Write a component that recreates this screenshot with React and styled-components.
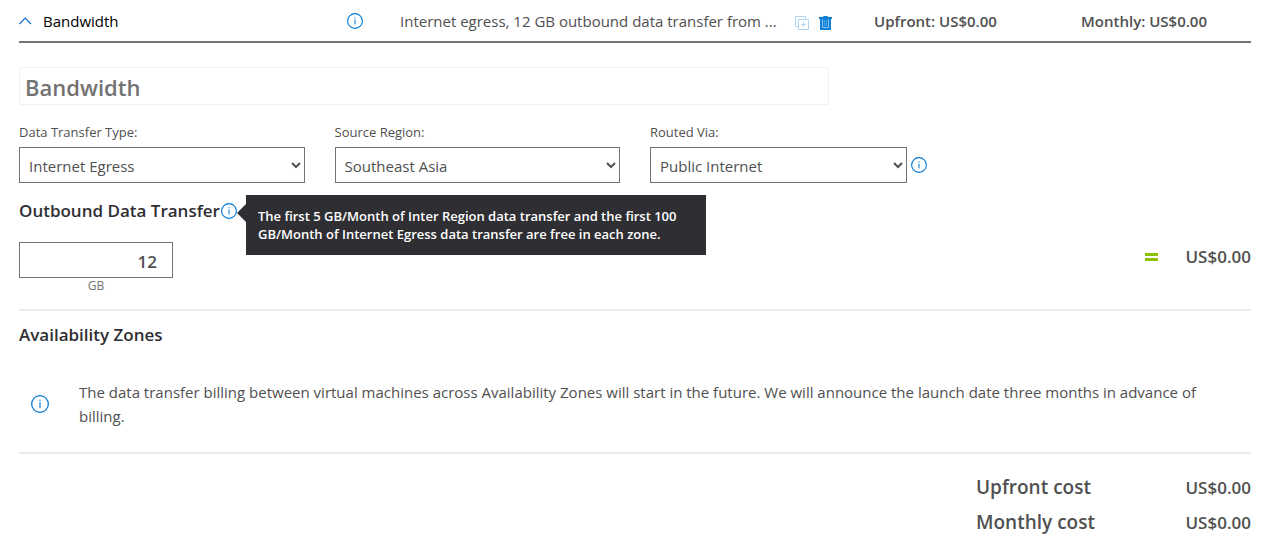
import React from "react";
import styled, { createGlobalStyle } from "styled-components";

const GlobalStyle = createGlobalStyle`
  *, *::before, *::after { box-sizing: border-box; }
  body {
    margin: 0;
    background: #fff;
    color: #505050;
    font-family: "Segoe UI", "Open Sans", "Noto Sans", sans-serif;
    font-size: 15px;
    line-height: 24px;
  }
  button, input, select { font: inherit; color: inherit; }
  svg { flex: none; }
`;

const Page = styled.main`
  padding: 0 23px 0 19px;
`;

const Header = styled.header`
  display: grid;
  grid-template-columns: 328fr 53fr 395fr 79fr 207fr 170fr;
  align-items: center;
  height: 43px;
  border-bottom: 2px solid #737378;
`;

const Toggle = styled.button`
  display: flex;
  align-items: center;
  gap: 11px;
  padding: 0;
  border: 0;
  background: none;
  color: #000;
  cursor: pointer;
`;

const IconButton = styled.button`
  display: inline-flex;
  flex: none;
  padding: 0;
  border: 0;
  background: none;
  color: #0078d4;
  cursor: pointer;
  &:disabled { opacity: 0.3; cursor: default; }
`;

const Summary = styled.span`
  white-space: nowrap;
`;

const Actions = styled.div`
  display: flex;
  gap: 10px;
  padding-top: 4px;
`;

const HeaderCost = styled.span`
  font-weight: 600;
  white-space: nowrap;
`;

const NameInput = styled.input`
  display: block;
  width: calc(66% - 3px);
  height: 38px;
  margin-top: 24px;
  padding: 2px 5px 0;
  border: 1px solid #f2f2f2;
  background: #fff;
  color: #737373;
  font-size: 22px;
  font-weight: 600;
`;

const Fields = styled.div`
  display: grid;
  grid-template-columns: repeat(4, 1fr);
  column-gap: 30px;
  margin-top: 17px;
`;

const FieldLabel = styled.label`
  display: block;
  height: 25px;
  line-height: 20px;
  font-size: 13px;
`;

const Control = styled.div`
  display: flex;
  align-items: center;
  gap: 4px;
  padding-right: ${(p) => (p.$withInfo ? "9px" : "0")};
`;

const Select = styled.select`
  flex: 1;
  min-width: 0;
  height: 36px;
  padding: 2px 5px 0 5px;
  border: 1px solid #737373;
  border-radius: 0;
  background: #fff;
`;

const SectionTitle = styled.h2`
  display: flex;
  align-items: center;
  gap: 1px;
  margin: 0;
  color: #2f2f33;
  font-size: 17px;
  font-weight: 600;
  line-height: 24px;
`;

const TransferSection = styled.section`
  padding: 16px 0 15px;
  border-bottom: 2px solid #eaeaea;
`;

const TipAnchor = styled.span`
  position: relative;
  display: inline-flex;
`;

const Tooltip = styled.div`
  position: absolute;
  z-index: 1;
  top: -8px;
  left: 25px;
  width: 460px;
  padding: 12px;
  background: #2f2f33;
  color: #fff;
  font-size: 13px;
  font-weight: 600;
  line-height: 18px;
  white-space: nowrap;
  &::before {
    content: "";
    position: absolute;
    top: 9px;
    right: 100%;
    border: 9px solid transparent;
    border-left-width: 0;
    border-right-color: #2f2f33;
  }
`;

const TransferRow = styled.div`
  display: flex;
  justify-content: space-between;
  margin-top: 19px;
`;

const Quantity = styled.div`
  width: 154px;
`;

const QuantityInput = styled.input`
  display: block;
  width: 100%;
  height: 36px;
  padding: 2px 15px 0;
  border: 1px solid #737373;
  border-radius: 0;
  font-size: 17px;
  font-weight: 600;
  text-align: right;
`;

const Unit = styled.label`
  display: block;
  color: #737373;
  font-size: 12px;
  line-height: 16px;
  text-align: center;
`;

const Result = styled.div`
  display: flex;
  align-items: center;
  gap: 27px;
  height: 30px;
`;

const Equals = styled.span`
  width: 13px;
  height: 8px;
  border: solid #8dc10a;
  border-width: 3px 0;
`;

const Amount = styled.span`
  font-size: 17px;
  font-weight: 600;
`;

const ZonesSection = styled.section`
  padding: 12px 0 24px;
  border-bottom: 2px solid #eaeaea;
`;

const Notice = styled.div`
  display: flex;
  align-items: center;
  gap: 30px;
  margin-top: 33px;
  padding-left: 12px;
`;

const NoticeText = styled.p`
  margin: 0;
  padding-right: 24px;
`;

const Totals = styled.dl`
  display: grid;
  grid-template-columns: 1fr auto;
  width: 275px;
  margin: 16px 0 0 auto;
  line-height: 35px;
`;

const TotalName = styled.dt`
  font-size: 19px;
  font-weight: 600;
`;

const TotalValue = styled.dd`
  margin: 0;
  font-size: 17px;
  font-weight: 600;
`;

function InfoIcon({ size = 16 }) {
  return (
    <svg width={size} height={size} viewBox="0 0 16 16" fill="none" stroke="#0078d4">
      <circle cx="8" cy="8" r="7.4" strokeWidth="1.1" />
      <path d="M8 6.5v5M8 4.2v1.1" strokeWidth="1" />
    </svg>
  );
}

function Info() {
  return (
    <IconButton type="button" aria-label="More information">
      <InfoIcon />
    </IconButton>
  );
}

function SelectField({ id, label, value, info }) {
  return (
    <div>
      <FieldLabel htmlFor={id}>{label}</FieldLabel>
      <Control $withInfo={info}>
        <Select id={id} defaultValue={value}>
          <option>{value}</option>
        </Select>
        {info && <Info />}
      </Control>
    </div>
  );
}

export default function App() {
  return (
    <>
      <GlobalStyle />
      <Page>
        <Header>
          <Toggle type="button" aria-expanded="true">
            <svg width="13" height="8" viewBox="0 0 13 8" fill="none" stroke="#0f6fd0" strokeWidth="1.2">
              <path d="M.5 7 6.2 1.2 12 7" />
            </svg>
            Bandwidth
          </Toggle>
          <Info />
          <Summary>Internet egress, 12 GB outbound data transfer from ...</Summary>
          <Actions>
            <IconButton type="button" aria-label="Clone" disabled>
              <svg width="14" height="14" viewBox="0 0 14 14" fill="none" stroke="currentColor">
                <path d="M3 10.5H.5V.5h10V3M3.500 3.500h10v10h-10zM8.500 6v5M6 8.500h5" />
              </svg>
            </IconButton>
            <IconButton type="button" aria-label="Delete">
              <svg width="13" height="14" viewBox="0 0 13 14">
                <path fill="#0f80d8" d="M4.300 0h4.400v1H13v2h-1v11H1V3H0V1h4.300z" />
                <path fill="none" stroke="#8cc4ef" d="M3.500 3.500v8h6v-8" />
                <path stroke="#4ba0e2" d="M5.500 4v6M7.500 4v6" />
              </svg>
            </IconButton>
          </Actions>
          <HeaderCost>Upfront: US$0.00</HeaderCost>
          <HeaderCost>Monthly: US$0.00</HeaderCost>
        </Header>

        <NameInput aria-label="Name" defaultValue="Bandwidth" />

        <Fields>
          <SelectField id="type" label="Data Transfer Type:" value="Internet Egress" />
          <SelectField id="region" label="Source Region:" value="Southeast Asia" />
          <SelectField id="route" label="Routed Via:" value="Public Internet" info />
        </Fields>

        <TransferSection>
          <SectionTitle>
            Outbound Data Transfer
            <TipAnchor>
              <Info />
              <Tooltip role="tooltip">
                The first 5 GB/Month of Inter Region data transfer and the first 100
                <br />
                GB/Month of Internet Egress data transfer are free in each zone.
              </Tooltip>
            </TipAnchor>
          </SectionTitle>
          <TransferRow>
            <Quantity>
              <QuantityInput id="quantity" defaultValue="12" inputMode="numeric" />
              <Unit htmlFor="quantity">GB</Unit>
            </Quantity>
            <Result>
              <Equals role="img" aria-label="equals" />
              <Amount>US$0.00</Amount>
            </Result>
          </TransferRow>
        </TransferSection>

        <ZonesSection>
          <SectionTitle>Availability Zones</SectionTitle>
          <Notice>
            <InfoIcon size={18} />
            <NoticeText>
              The data transfer billing between virtual machines across Availability Zones will start in the
              future. We will announce the launch date three months in advance of billing.
            </NoticeText>
          </Notice>
        </ZonesSection>

        <Totals>
          <TotalName>Upfront cost</TotalName>
          <TotalValue>US$0.00</TotalValue>
          <TotalName>Monthly cost</TotalName>
          <TotalValue>US$0.00</TotalValue>
        </Totals>
      </Page>
    </>
  );
}
